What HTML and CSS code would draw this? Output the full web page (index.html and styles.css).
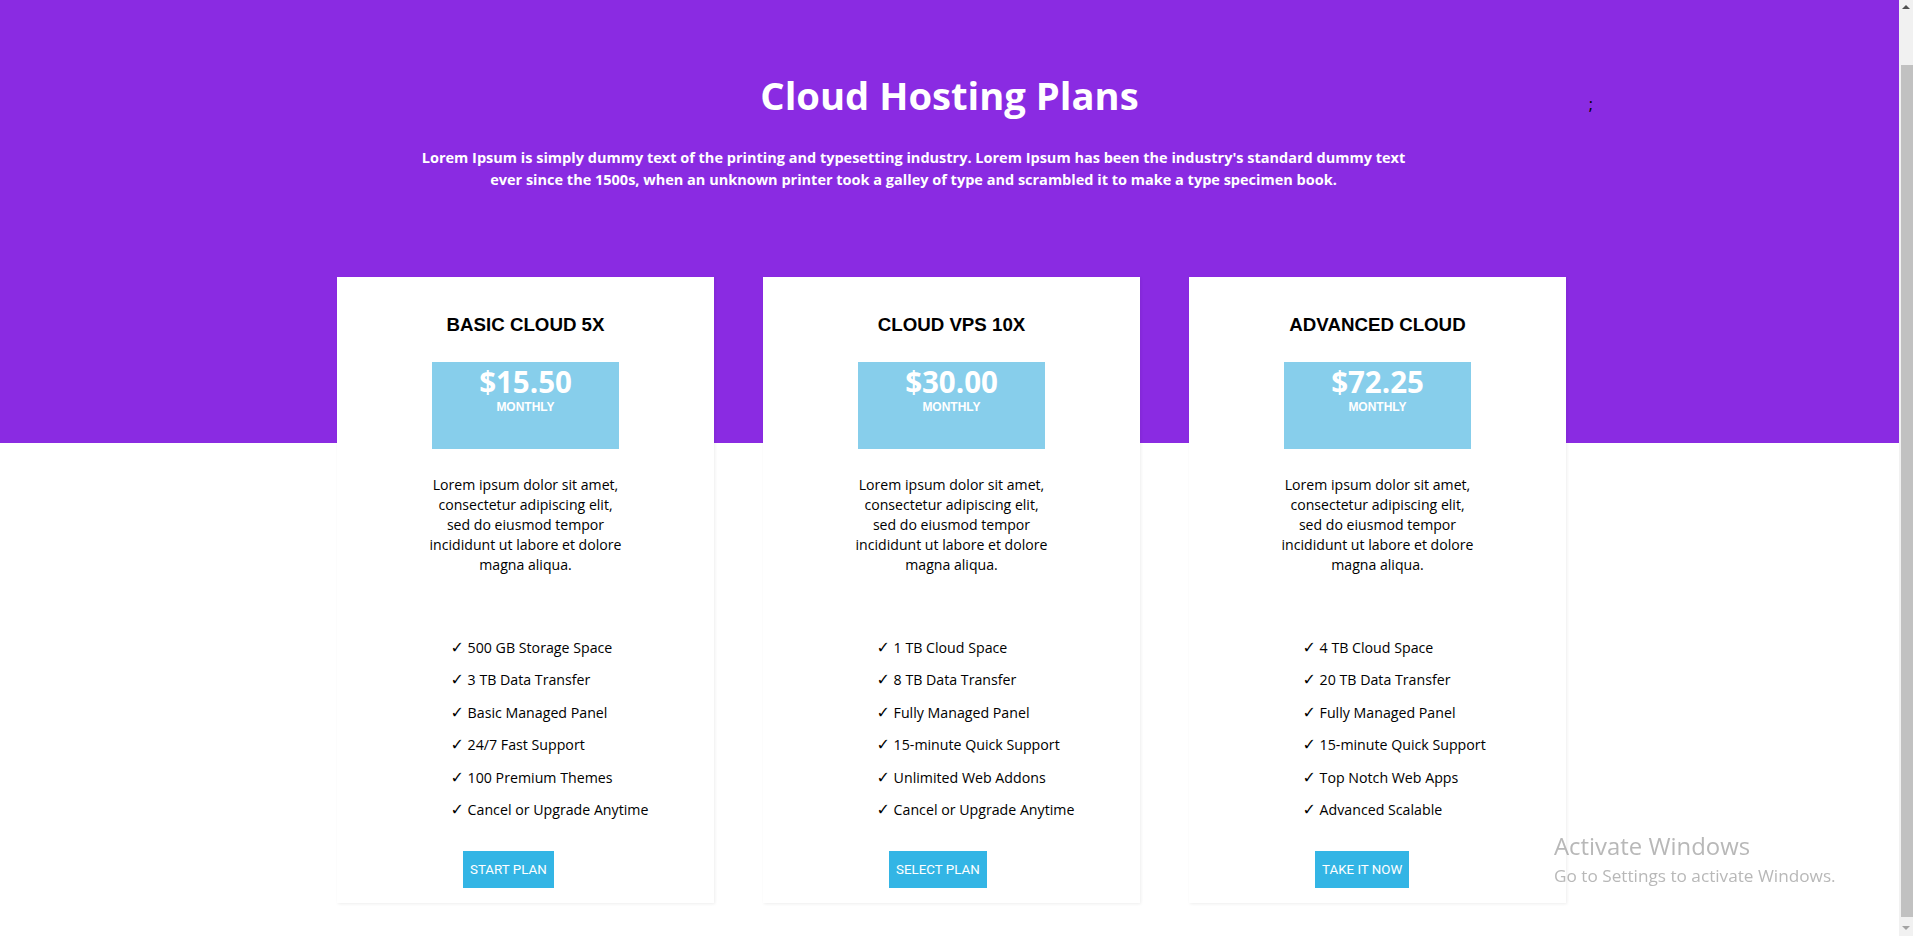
FILE: index.html
```html
<!DOCTYPE html>
<html lang="en">
<head>
<meta charset="utf-8">
<title>Cloud Hosting Plans</title>
<link rel="stylesheet" href="styles.css">
</head>
<body>
<div class="page">
  <header class="hero">
    <div class="title-row">
      <span class="spacer"></span>
      <h1 class="title">Cloud Hosting Plans</h1>
      <span class="stray">;</span>
    </div>
    <p class="lead">Lorem Ipsum is simply dummy text of the printing and typesetting industry. Lorem Ipsum has been the industry's standard dummy text ever since the 1500s, when an unknown printer took a galley of type and scrambled it to make a type specimen book.</p>
  </header>

  <main class="cards">
    <section class="card">
      <h3 class="card-title">BASIC CLOUD 5X</h3>
      <div class="price-box">
        <div class="price">$15.50</div>
        <div class="period">MONTHLY</div>
      </div>
      <p class="desc">Lorem ipsum dolor sit amet, consectetur adipiscing elit, sed do eiusmod tempor incididunt ut labore et dolore magna aliqua.</p>
      <ul class="features">
        <li><span class="check">✓</span> 500 GB Storage Space</li>
        <li><span class="check">✓</span> 3 TB Data Transfer</li>
        <li><span class="check">✓</span> Basic Managed Panel</li>
        <li><span class="check">✓</span> 24/7 Fast Support</li>
        <li><span class="check">✓</span> 100 Premium Themes</li>
        <li><span class="check">✓</span> Cancel or Upgrade Anytime</li>
      </ul>
      <button class="btn">START PLAN</button>
    </section>

    <section class="card">
      <h3 class="card-title">CLOUD VPS 10X</h3>
      <div class="price-box">
        <div class="price">$30.00</div>
        <div class="period">MONTHLY</div>
      </div>
      <p class="desc">Lorem ipsum dolor sit amet, consectetur adipiscing elit, sed do eiusmod tempor incididunt ut labore et dolore magna aliqua.</p>
      <ul class="features">
        <li><span class="check">✓</span> 1 TB Cloud Space</li>
        <li><span class="check">✓</span> 8 TB Data Transfer</li>
        <li><span class="check">✓</span> Fully Managed Panel</li>
        <li><span class="check">✓</span> 15-minute Quick Support</li>
        <li><span class="check">✓</span> Unlimited Web Addons</li>
        <li><span class="check">✓</span> Cancel or Upgrade Anytime</li>
      </ul>
      <button class="btn">SELECT PLAN</button>
    </section>

    <section class="card">
      <h3 class="card-title">ADVANCED CLOUD</h3>
      <div class="price-box">
        <div class="price">$72.25</div>
        <div class="period">MONTHLY</div>
      </div>
      <p class="desc">Lorem ipsum dolor sit amet, consectetur adipiscing elit, sed do eiusmod tempor incididunt ut labore et dolore magna aliqua.</p>
      <ul class="features">
        <li><span class="check">✓</span> 4 TB Cloud Space</li>
        <li><span class="check">✓</span> 20 TB Data Transfer</li>
        <li><span class="check">✓</span> Fully Managed Panel</li>
        <li><span class="check">✓</span> 15-minute Quick Support</li>
        <li><span class="check">✓</span> Top Notch Web Apps</li>
        <li><span class="check">✓</span> Advanced Scalable</li>
      </ul>
      <button class="btn">TAKE IT NOW</button>
    </section>
  </main>
</div>

<div class="scrollbar">
  <span class="arrow-up"></span>
  <span class="thumb"></span>
  <span class="arrow-down"></span>
</div>

<div class="watermark">
  <div class="wm-title">Activate Windows</div>
  <div class="wm-sub">Go to Settings to activate Windows.</div>
</div>
</body>
</html>
```

FILE: styles.css
```css
* { box-sizing: border-box; }

body {
  margin: 0;
  font-family: "Open Sans", "Liberation Sans", sans-serif;
  background: #fff;
  overflow: hidden;
}

.page {
  width: calc(100% - 14px);
  min-height: 936px;
  background: #fff linear-gradient(#8a2be2, #8a2be2) no-repeat 0 0 / 100% 443px;
}

.hero {
  padding-top: 69px;
}

.title-row {
  display: grid;
  grid-template-columns: 1fr auto 1fr;
  align-items: baseline;
}

.title {
  margin: 0;
  color: #fff;
  font-weight: 700;
  font-size: 38.2px;
  line-height: normal;
  text-align: center;
}

.stray {
  padding-left: 450px;
  font-size: 16px;
  color: #000;
}

.lead {
  width: 1000px;
  margin: 25.6px 0 0 calc(50% - 536px);
  color: #fff;
  font-weight: 700;
  font-size: 14.5px;
  line-height: 22.5px;
  text-align: center;
}

.cards {
  display: flex;
  justify-content: center;
  gap: 49px;
  margin-top: 85.25px;
  padding-left: 4px;
}

.card {
  width: 377px;
  background: #fff;
  padding: 37px 0 15px;
  box-shadow: 1px 1px 3px rgba(0, 0, 0, 0.07);
}

.card-title {
  margin: 0;
  font-family: "Liberation Sans", Arial, sans-serif;
  font-weight: 700;
  font-size: 18.72px;
  line-height: 22px;
  text-align: center;
  color: #000;
}

.price-box {
  width: 187px;
  height: 87px;
  margin: 26px auto 0;
  padding-top: 5.5px;
  background: #87ceeb;
  color: #fff;
  text-align: center;
}

.price {
  font-weight: 700;
  font-size: 29.5px;
  line-height: 30px;
}

.period {
  margin-top: 3px;
  font-family: "Liberation Sans", Arial, sans-serif;
  font-weight: 700;
  font-size: 12px;
  line-height: 14px;
}

.desc {
  width: 200px;
  margin: 26px auto 0;
  font-size: 14.1px;
  line-height: 20px;
  text-align: center;
  color: #000;
}

.features {
  list-style: none;
  margin: 63px 0 0;
  padding: 0 0 0 113.5px;
  font-size: 14.2px;
  color: #000;
}

.features li {
  line-height: 20px;
  margin-bottom: 12.5px;
}

.features li:last-child {
  margin-bottom: 0;
}

.check {
  font-family: "DejaVu Sans", sans-serif;
  font-weight: 700;
  font-size: 16px;
  line-height: 20px;
}

.btn {
  display: block;
  height: 37px;
  margin: 30.5px 0 0 126px;
  padding: 0 7px;
  border: none;
  background: #33b5e5;
  color: #fff;
  font-family: Roboto, "Liberation Sans", sans-serif;
  font-size: 13.33px;
}

.scrollbar {
  position: fixed;
  top: 0;
  right: 0;
  width: 14px;
  height: 936px;
  background: #f1f1f1;
}

.thumb {
  position: absolute;
  top: 65px;
  bottom: 19px;
  left: 2px;
  right: 0;
  background: #c1c1c1;
}

.arrow-up {
  position: absolute;
  top: 5px;
  left: 3px;
  border-left: 4px solid transparent;
  border-right: 4px solid transparent;
  border-bottom: 4px solid #505050;
}

.arrow-down {
  position: absolute;
  bottom: 6px;
  left: 3px;
  border-left: 4px solid transparent;
  border-right: 4px solid transparent;
  border-top: 4px solid #a3a3a3;
}

.watermark {
  position: fixed;
  left: 1554px;
  top: 829px;
  color: rgba(160, 160, 160, 0.75);
}

.wm-title {
  font-size: 23.9px;
  line-height: normal;
}

.wm-sub {
  margin-top: 2px;
  font-size: 17.2px;
  line-height: normal;
}
```
